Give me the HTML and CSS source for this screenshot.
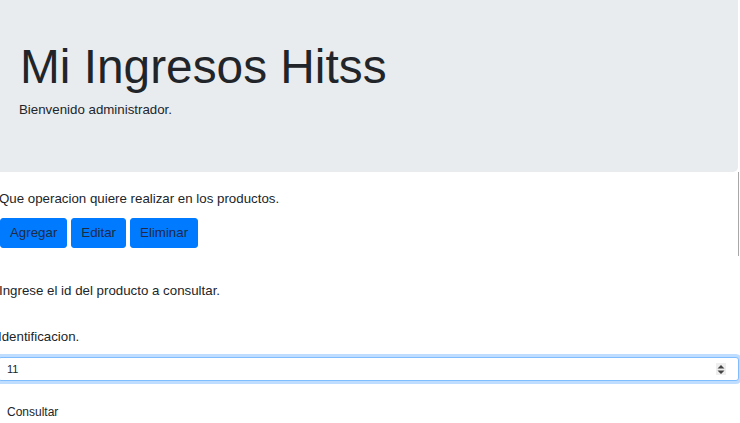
FILE: index.html
```html
<!DOCTYPE html>
<html lang="es">
<head>
<meta charset="utf-8">
<title>Mi Ingresos Hitss</title>
<link rel="stylesheet" href="styles.css">
</head>
<body>
  <header class="jumbotron">
    <h1 class="title">Mi Ingresos Hitss</h1>
    <p class="lead">Bienvenido administrador.</p>
  </header>
  <section class="ops">
    <p class="text">Que operacion quiere realizar en los productos.</p>
    <div class="btn-row">
      <button class="btn">Agregar</button>
      <button class="btn">Editar</button>
      <button class="btn">Eliminar</button>
    </div>
  </section>
  <section class="query">
    <p class="text intro">Ingrese el id del producto a consultar.</p>
    <form class="form">
      <label class="label" for="id">Identificacion.</label>
      <div class="field">
        <input class="input" id="id" type="text" value="11">
        <span class="spin"><svg width="8" height="9" viewBox="0 0 8 9"><path d="M4 0 L7.5 3.5 H0.5 Z M4 9 L0.5 5.5 H7.5 Z" fill="#444"/></svg></span>
      </div>
      <button class="plain" type="button">Consultar</button>
    </form>
  </section>
</body>
</html>
```
FILE: styles.css
```css
html, body {
  margin: 0;
  padding: 0;
  background: #fff;
  color: #212529;
  font-family: "Liberation Sans", Arial, sans-serif;
  font-size: 13.3px;
  line-height: 21px;
  overflow: hidden;
}

.jumbotron {
  width: 718px;
  height: 134px;
  padding: 38px 0 0 20px;
  background: #e9ecef;
  border-radius: 0 0 5px 0;
}

.title {
  margin: 0;
  font-size: 47.8px;
  font-weight: 400;
  line-height: 57.6px;
  letter-spacing: 0;
}

.lead {
  margin: 3px 0 0 -1px;
}

.ops {
  width: 739px;
  border-right: 1px solid #a8a8a8;
  padding: 16px 0 8px 0;
  margin-left: -1px;
}

.text {
  margin: 0;
}

.btn-row {
  display: flex;
  gap: 4px;
  margin-top: 9px;
  padding-left: 1px;
}

.btn {
  font-family: inherit;
  font-size: 13.3px;
  line-height: 20px;
  color: #1f2a44;
  background: #007bff;
  border: 1px solid #007bff;
  border-radius: 3px;
  padding: 4px 9px;
  margin: 0;
}

.query {
  margin-left: -1px;
  padding-top: 24px;
}

.form {
  display: flex;
  flex-direction: column;
  align-items: flex-start;
  margin-top: 25px;
  margin-left: -1px;
}

.label {
  display: block;
}

.field {
  position: relative;
  margin-top: 10px;
  width: 741px;
}

.input {
  box-sizing: border-box;
  width: 741px;
  height: 24px;
  margin: 0;
  padding: 0 8px;
  font-family: inherit;
  font-size: 11px;
  color: #212529;
  border: 1px solid #80bdff;
  border-radius: 3px;
  box-shadow: 0 0 0 3px rgba(0, 123, 255, 0.25);
  outline: none;
  display: block;
}

.spin {
  position: absolute;
  right: 13px;
  top: 6px;
  width: 10px;
  height: 12px;
  background: #eee;
  display: flex;
  align-items: center;
  justify-content: center;
}

.spin svg {
  display: block;
}

.plain {
  margin-top: 23px;
  margin-left: 3px;
  padding: 1px 6px;
  background: transparent;
  border: 0;
  font-family: inherit;
  font-size: 12px;
  line-height: 14px;
  color: #212529;
}
```
